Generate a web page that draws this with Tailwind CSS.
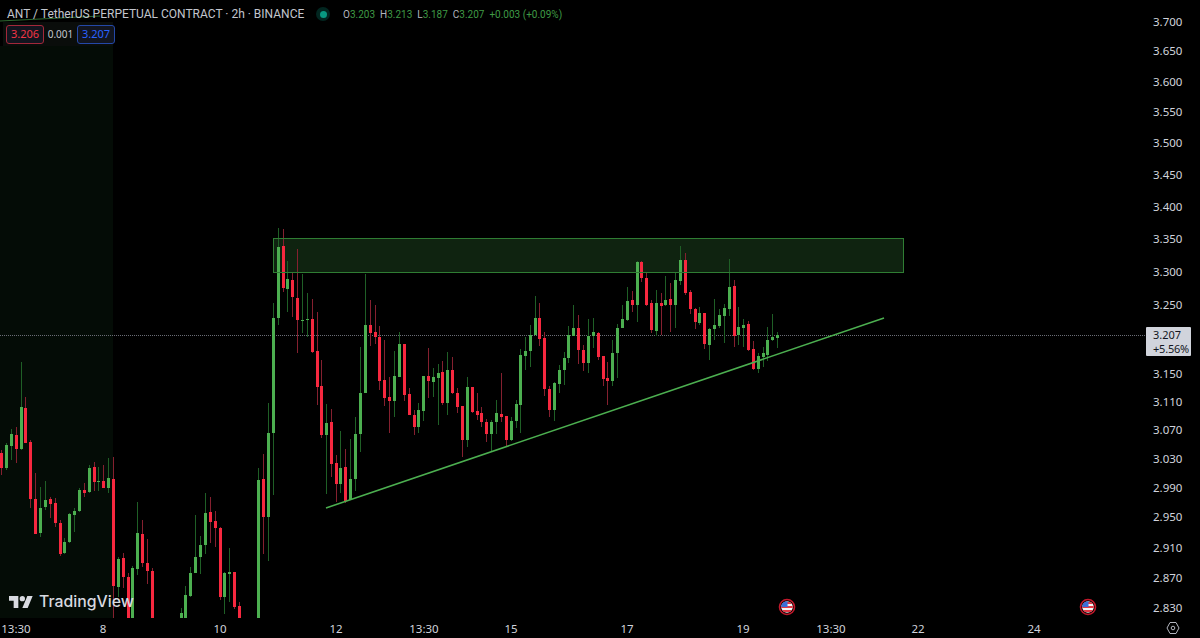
<!DOCTYPE html>
<html lang="en">
<head>
    <meta charset="UTF-8">
    <title>ANT / TetherUS PERPETUAL CONTRACT - 2h</title>
    <script src="https://cdn.jsdelivr.net/npm/@tailwindcss/browser@4"></script>
</head>
<body class="bg-black overflow-hidden font-['Noto_Sans',sans-serif]">
    <div class="w-[1200px] h-[638px] flex flex-col bg-black text-[#d1d4dc]">
        <div class="flex h-[618px]">
            <!-- Chart pane -->
            <div class="relative w-[1146px] h-[618px] overflow-hidden">
                <svg id="chart" class="absolute inset-0" width="1146" height="618" viewBox="0 0 1146 618">
                    <defs>
                        <clipPath id="flagClip"><circle cx="0" cy="0" r="5.8"/></clipPath>
                        <g id="usFlag">
                            <circle r="7.5" fill="#000" stroke="#c2182b" stroke-width="1.6"/>
                            <g clip-path="url(#flagClip)">
                                <rect x="-6" y="-6" width="12" height="12" fill="#f5f5f5"/>
                                <rect x="-6" y="-1" width="12" height="2" fill="#e53946"/>
                                <rect x="-6" y="3" width="12" height="2" fill="#e53946"/>
                                <rect x="0" y="-5" width="6" height="2" fill="#e53946"/>
                                <rect x="-6" y="-6" width="6.5" height="6" fill="#3b6fd8"/>
                            </g>
                        </g>
                    </defs>
                    <rect x="0" y="46" width="113" height="572" fill="#040c06"/>
                    <rect x="3" y="22" width="110" height="24" fill="#0a0d0b"/>
                    <line x1="0" y1="21" x2="100" y2="16" stroke="#4caf50" stroke-width="1" opacity="0.6"/>
                    <line x1="0" y1="335.5" x2="1146" y2="335.5" stroke="#6a6d76" stroke-width="1" stroke-dasharray="1 1"/>
                    <rect x="273.5" y="238.5" width="630" height="34" fill="#4caf50" fill-opacity="0.2"/>
                    <g id="candles"></g>
                    <rect x="273.5" y="238.5" width="630" height="34" fill="none" stroke="#2f7d33" stroke-width="1"/>
                    <line x1="326" y1="508" x2="884" y2="318" stroke="#4caf50" stroke-width="1.5"/>
                    <use href="#usFlag" x="787" y="607"/>
                    <use href="#usFlag" x="1088" y="607"/>
                </svg>

                <!-- Legend -->
                <div class="absolute left-[7px] top-[6px] flex items-center h-[16px] whitespace-nowrap">
                    <span class="w-[297px] text-[12px] text-[#c3c6ce] font-['Roboto',sans-serif]">ANT / TetherUS PERPETUAL CONTRACT · 2h · BINANCE</span>
                    <span class="ml-[12px] w-[14px] h-[14px] rounded-full bg-[#089981]/25 flex items-center justify-center">
                        <span class="w-[7px] h-[7px] rounded-full bg-[#089981]"></span>
                    </span>
                    <span class="ml-[13px] flex gap-[5px] text-[10px] text-[#3f9a45] font-['Roboto',sans-serif]">
                        <span><span class="text-[#b2b5be]">O</span>3.203</span>
                        <span><span class="text-[#b2b5be]">H</span>3.213</span>
                        <span><span class="text-[#b2b5be]">L</span>3.187</span>
                        <span><span class="text-[#b2b5be]">C</span>3.207</span>
                        <span>+0.003 (+0.09%)</span>
                    </span>
                </div>
                <div class="absolute left-[6px] top-[25px] flex items-center">
                    <span class="w-[38px] h-[19px] rounded-[3px] border border-[#a3283a] bg-[#12151f] text-[#f23645] text-[11px] flex items-center justify-center">3.206</span>
                    <span class="w-[33px] text-center text-[10px] text-[#c3c6ce]">0.001</span>
                    <span class="w-[38px] h-[19px] rounded-[3px] border border-[#2448a8] bg-[#12151f] text-[#2962ff] text-[11px] flex items-center justify-center">3.207</span>
                </div>

                <!-- Watermark -->
                <div class="absolute left-[9px] top-[591px] flex items-center gap-[6px] text-[#d8dae0]">
                    <svg width="24" height="12" viewBox="0 4 36 18" fill="currentColor"><path d="M14 22H7V11H0V4h14v18zM28 22h-8l7.5-18h8L28 22z"/><circle cx="20" cy="8" r="4"/></svg>
                    <span class="text-[15.8px] leading-[22px] font-medium font-['Inter',sans-serif]">TradingView</span>
                </div>
            </div>

            <!-- Price axis -->
            <div class="relative w-[54px] h-[618px] text-[11.5px] leading-[14px]">
                <span class="absolute left-[7px] top-[15px]">3.700</span>
                <span class="absolute left-[7px] top-[44px]">3.650</span>
                <span class="absolute left-[7px] top-[75px]">3.600</span>
                <span class="absolute left-[7px] top-[105px]">3.550</span>
                <span class="absolute left-[7px] top-[136px]">3.500</span>
                <span class="absolute left-[7px] top-[168px]">3.450</span>
                <span class="absolute left-[7px] top-[200px]">3.400</span>
                <span class="absolute left-[7px] top-[232px]">3.350</span>
                <span class="absolute left-[7px] top-[265px]">3.300</span>
                <span class="absolute left-[7px] top-[298px]">3.250</span>
                <span class="absolute left-[7px] top-[367px]">3.150</span>
                <span class="absolute left-[7px] top-[395px]">3.110</span>
                <span class="absolute left-[7px] top-[423px]">3.070</span>
                <span class="absolute left-[7px] top-[452px]">3.030</span>
                <span class="absolute left-[7px] top-[481px]">2.990</span>
                <span class="absolute left-[7px] top-[510px]">2.950</span>
                <span class="absolute left-[7px] top-[541px]">2.910</span>
                <span class="absolute left-[7px] top-[571px]">2.870</span>
                <span class="absolute left-[7px] top-[601px]">2.830</span>
                <div class="absolute left-0 top-[327px] w-[45px] h-[29px] bg-[#d1d4dc] text-[#131722] rounded-[1px] pl-[7px] pt-px text-[11px] whitespace-nowrap">
                    <div>3.207</div>
                    <div class="tracking-[-0.2px]">+5.56%</div>
                </div>
            </div>
        </div>

        <!-- Time axis -->
        <div class="relative h-[20px] text-[11.5px] leading-[22px]">
            <span class="absolute left-[16px] -translate-x-1/2">13:30</span>
            <span class="absolute left-[103px] -translate-x-1/2">8</span>
            <span class="absolute left-[220px] -translate-x-1/2">10</span>
            <span class="absolute left-[336px] -translate-x-1/2">12</span>
            <span class="absolute left-[424px] -translate-x-1/2">13:30</span>
            <span class="absolute left-[511px] -translate-x-1/2">15</span>
            <span class="absolute left-[627px] -translate-x-1/2">17</span>
            <span class="absolute left-[743px] -translate-x-1/2">19</span>
            <span class="absolute left-[831px] -translate-x-1/2">13:30</span>
            <span class="absolute left-[918px] -translate-x-1/2">22</span>
            <span class="absolute left-[1034px] -translate-x-1/2">24</span>
            <svg class="absolute left-[1166px] top-[3px]" width="14" height="14" viewBox="0 0 14 14" fill="none" stroke="#b2b5be" stroke-width="1">
                <path d="M4 1.5h6L13 7l-3 5.5H4L1 7z"/>
                <circle cx="7" cy="7" r="1.8"/>
            </svg>
        </div>
    </div>

    <script>
        // candles read off the chart: [x, wickTop, wickBottom, bodyTop, bodyBottom, up?]
        const sets = [
            { ox: 0, oy: 380, rows: [
                [3,210,285,220,265,0],[19,190,270,195,263,1],[34,148,240,162,198,1],[49,140,250,165,208,0],
                [63,-54,210,82,208,1],[77,50,190,84,188,0],[92,180,385,185,356,0],[107,280,462,356,462,0],
                [121,322,470,384,458,1],[136,304,390,360,382,1],[151,350,415,357,371,0],[166,355,440,369,430,0],
                [180,420,528,430,522,0],[194,475,522,485,519,1],[209,398,490,402,486,1],[224,385,455,392,404,1],
                [237,325,395,331,393,1],[252,310,352,331,339,0],[267,255,340,264,336,1],[282,245,332,262,306,0],
                [296,262,332,304,306,1],[310,255,325,303,323,0],[325,235,340,294,324,1],[340,230,720,296,618,0],
                [355,530,650,536,620,1],[369,520,625,535,590,0],[384,580,720,592,720,0],[398,558,720,564,720,1],
                [413,366,585,460,567,1],[427,420,560,463,548,0],[441,478,612,548,573,0],[456,565,720,572,720,0],
                [543,685,720,700,720,1],[557,618,720,646,720,1],[572,560,650,578,648,1],[587,405,580,530,578,1],
                [601,468,582,495,531,1],[616,340,522,400,495,1],[631,350,490,395,425,0],[646,392,500,423,443,0],
                [660,440,660,444,652,0],[674,575,702,578,652,1],[689,505,665,576,581,1],[704,575,688,577,680,0],
                [717,665,720,678,720,0],[775,265,720,301,720,1],[790,222,522,298,411,0],[805,70,542,160,411,1]
            ]},
            { ox: 250, oy: 220, rows: [
                [70,250,825,293,640,1],[85,25,315,80,295,1],[99,28,215,78,203,0],[113,123,275,177,207,1],
                [128,160,290,179,231,0],[143,87,400,233,300,0],[157,163,340,300,303,1],[172,220,350,297,301,1],
                [186,237,398,297,397,0],[201,277,555,394,501,0],[215,420,655,498,645,0],[229,552,822,610,645,1],
                [244,568,770,606,732,0],[259,706,845,729,792,0],[272,633,820,743,792,1],[287,687,850,741,842,0],
                [302,658,840,777,840,1],[317,590,812,642,777,1],[331,380,695,518,642,1],[346,163,520,315,520,1],
                [361,240,378,314,339,0],[375,255,372,336,350,0],[389,318,510,350,484,0],[404,360,558,481,533,0],
                [418,472,640,531,543,0],[433,392,590,468,544,1],[447,337,470,372,470,1],[462,372,542,372,524,0],
                [477,503,585,522,584,0],[492,570,645,584,621,0],[505,548,640,571,621,1],[520,468,602,468,572,1],
                [535,385,533,468,483,0],[550,445,530,472,485,1],[565,432,615,458,473,1],[578,423,555,456,549,0],
                [593,395,585,449,549,1],[608,410,522,449,520,0],[623,503,580,520,560,0],[637,558,710,558,660,0],
                [651,470,680,501,660,1],[666,500,580,501,577,0],[681,520,600,574,585,0],[695,562,622,580,606,0],
                [710,598,666,606,642,0],[724,600,695,606,642,1],[739,540,642,580,606,1],[753,460,605,582,590,0],
                [768,588,680,589,660,0],[783,590,662,603,660,1],[798,540,625,552,603,1],[811,388,640,405,554,1],
                [826,350,450,393,408,1],[841,315,440,345,393,1],[856,228,345,295,345,1],[869,250,378,293,357,0],
                [884,335,528,355,507,0],[898,498,590,507,570,0]
            ]},
            { ox: 500, oy: 230, rows: [
                [163,455,572,460,541,1],[177,405,490,420,462,1],[192,365,465,383,420,1],[206,288,400,315,385,1],
                [221,225,318,295,318,1],[235,255,403,295,359,0],[250,345,423,360,399,0],[265,267,430,318,399,1],
                [280,264,355,306,318,1],[295,306,390,309,381,0],[309,378,468,379,447,0],[323,396,525,445,453,0],
                [338,330,468,370,453,1],[353,283,445,293,370,1],[367,225,295,267,293,1],[381,172,272,213,270,1],
                [396,183,247,210,226,0],[411,92,275,96,224,1],[425,92,155,96,144,0],[439,130,228,145,224,0],
                [454,210,308,220,300,0],[469,180,318,220,304,1],[483,190,315,220,228,0],[497,138,228,209,226,1],
                [512,158,305,207,224,0],[527,127,295,150,225,1],[541,48,165,90,152,1],[556,70,195,90,188,0],
                [571,180,252,186,237,0],[586,235,298,236,276,0],[599,230,285,250,279,1],[614,250,357,250,342,0],
                [629,295,390,297,345,1],[644,208,330,284,298,1],[657,238,295,256,288,1],[672,222,338,235,258,1],
                [687,87,258,170,236,1],[702,150,350,168,317,0],[716,232,345,290,315,1],[731,268,352,284,293,1],
                [745,274,362,282,360,0],[760,332,420,358,418,0],[775,370,430,378,418,1],[789,350,412,370,380,1],
                [803,290,392,330,374,1],[818,252,332,320,330,1],[833,305,355,314,323,1]
            ]}
        ];

        let out = '';
        sets.forEach(({ ox, oy, rows }) => {
            rows.forEach(([x, wt, wb, bt, bb, up]) => {
                const cx = Math.round(ox + x / 3 - 0.5);
                const top = Math.round(oy + bt / 3);
                const h = Math.max(1, Math.round(oy + bb / 3) - top);
                const wTop = Math.round(oy + wt / 3);
                const wH = Math.round(oy + wb / 3) - wTop;
                out += `<rect x="${cx}" y="${wTop}" width="1" height="${wH}" fill="${up ? '#1f5f26' : '#85202f'}"/>`;
                out += `<rect x="${cx - 1}" y="${top}" width="3" height="${h}" fill="${up ? '#4caf50' : '#f7283f'}"/>`;
            });
        });
        document.getElementById('candles').innerHTML = out;
    </script>
</body>
</html>
